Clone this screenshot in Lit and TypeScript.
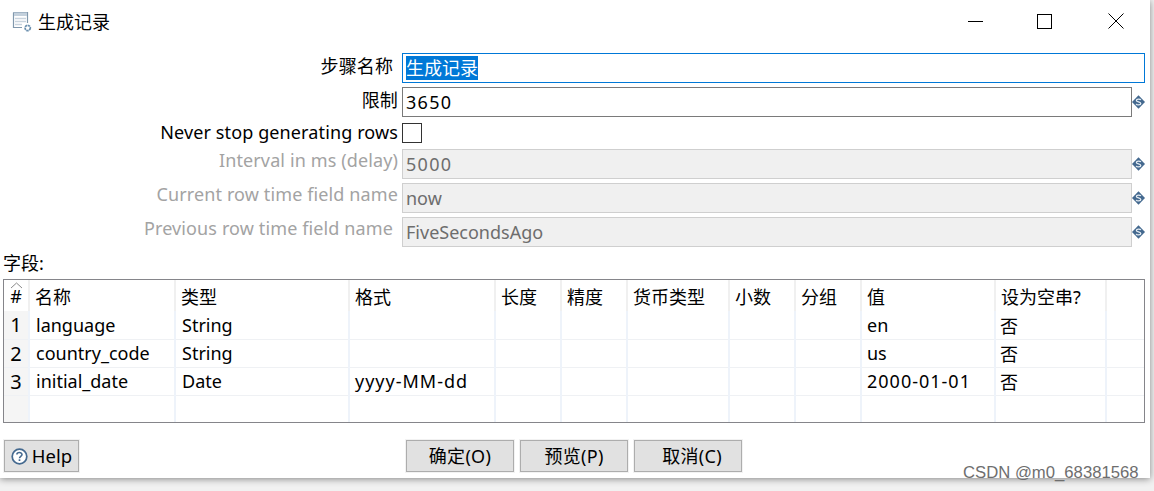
import { LitElement, html, css, svg } from "lit";
import { customElement } from "lit/decorators.js";

const COLS = [25, 146, 174, 146, 66, 66, 102, 66, 66, 134, 111, 39];
const HEAD = ["#", "名称", "类型", "格式", "长度", "精度", "货币类型", "小数", "分组", "值", "设为空串?", ""];
const ROWS = [
  ["1", "language", "String", "", "", "", "", "", "", "en", "否", ""],
  ["2", "country_code", "String", "", "", "", "", "", "", "us", "否", ""],
  ["3", "initial_date", "Date", "yyyy-MM-dd", "", "", "", "", "", "2000-01-01", "否", ""],
  ["", "", "", "", "", "", "", "", "", "", "", ""],
];
const WIDE = new Set(["yyyy-MM-dd", "2000-01-01"]);

const cellClass = (c: string, i: number) =>
  [i === 0 ? "num" : "", WIDE.has(c) ? "wide" : "", i >= 3 ? "tight" : "", c === "否" ? "cjk" : ""].join(" ");

const varIcon = html`<svg class="var" width="13" height="14" viewBox="0 0 13 14">
  <path d="M6.5 0.3 L13 7 L6.5 13.7 L0 7 Z" fill="#44698f"/>
  <path d="M8.8 5 C8.2 3.7 4.4 3.6 4.4 5.4 C4.4 7.2 8.8 6.6 8.8 8.6 C8.8 10.4 4.6 10.3 4.2 8.9" fill="none" stroke="#e6edf3" stroke-width="1.3"/>
</svg>`;

@customElement("app-root")
export class AppRoot extends LitElement {
  static styles = css`
    :host {
      display: block;
      width: 1154px;
      height: 491px;
      position: relative;
      overflow: hidden;
      background: #f1f1f1;
      font-family: "Noto Sans", "Noto Sans CJK SC", sans-serif;
      font-size: 18px;
      color: #000;
    }
    .window {
      width: 1150px;
      height: 478px;
      background: #fff;
      box-shadow: 0 1px 7px rgba(0, 0, 0, 0.45);
      display: flex;
      flex-direction: column;
    }
    .titlebar {
      height: 53px;
      flex: none;
      display: flex;
      align-items: flex-start;
      padding: 11px 0 0 12px;
      box-sizing: border-box;
    }
    .title {
      margin-left: 6px;
      font-size: 18px;
      line-height: 22px;
      flex: 1;
    }
    .ctrls {
      display: flex;
      margin-top: 3px;
      margin-right: 26px;
      gap: 53px;
    }
    .ctrls svg { display: block; }
    .ctrls .max { margin-top: -1px; }
    .ctrls .close { margin: -1px 0 0 2px; }
    .form {
      display: flex;
      flex-direction: column;
      gap: 4px;
    }
    .row {
      display: flex;
      align-items: center;
      height: 30px;
    }
    .row.check { height: 24px; }
    .label {
      width: 398px;
      flex: none;
      box-sizing: border-box;
      text-align: right;
      line-height: 24px;
      white-space: nowrap;
      letter-spacing: 0.12px;
      position: relative;
      top: -2px;
    }
    .check .label { top: -1px; }
    .label.in { padding-right: 5px; }
    .dis .label { color: #a3a3a3; top: -4px; }
    .input {
      margin-left: 4px;
      box-sizing: border-box;
      height: 30px;
      width: 730px;
      border: 1px solid #7a7a7a;
      padding: 2px 0 0 3px;
      line-height: 24px;
      background: #fff;
    }
    .input.focus {
      width: 743px;
      border: 1px solid #0078d7;
    }
    .input.digits { letter-spacing: 1.3px; }
    .sel { background: #0078d7; color: #fff; display: inline-block; line-height: 24px; }
    .dis .input {
      background: #f0f0f0;
      border-color: #cfcfcf;
      color: #6d6d6d;
    }
    .var { flex: none; display: block; }
    .box {
      margin-left: 4px;
      width: 20px;
      height: 20px;
      box-sizing: border-box;
      border: 1px solid #333;
      background: #fff;
    }
    .fields {
      margin: 4px 0 0 3px;
      height: 28px;
      line-height: 24px;
      font-size: 18px;
    }
    .grid {
      margin-left: 3px;
      width: 1142px;
      height: 144px;
      box-sizing: border-box;
      border: 1px solid #85858a;
      overflow: hidden;
    }
    table {
      border-collapse: collapse;
      table-layout: fixed;
      width: 1140px;
    }
    th, td {
      padding: 0 0 0 6px;
      text-align: left;
      font-weight: 400;
      font-size: 18px;
      white-space: nowrap;
      overflow: hidden;
      box-sizing: border-box;
    }
    th {
      height: 31px;
      padding-left: 5px;
      border-right: 2px solid #f0f0f0;
    }
    td {
      height: 28px;
      border-bottom: 1px solid #eff1f4;
      border-right: 2px solid #eef3fa;
    }
    td.tight { padding-left: 5px; }
    td.cjk { padding-left: 4px; }
    td.wide { letter-spacing: 1px; }
    tr:last-child td { border-bottom: none; }
    th.num, td.num {
      padding: 0;
      text-align: center;
    }
    th.num { position: relative; }
    td.num { background: #f5f5f5; font-size: 20px; }
    .caret { position: absolute; left: 6px; top: 2px; display: block; }
    th:last-child, td:last-child { border-right: none; }
    .buttons {
      display: flex;
      margin-top: 17px;
      padding-left: 4px;
    }
    .btn {
      box-sizing: border-box;
      height: 32px;
      background: #e1e1e1;
      border: 1px solid #adadad;
      outline: 1px solid #f2f2f2;
      display: flex;
      align-items: center;
      justify-content: center;
      line-height: 24px;
      white-space: nowrap;
    }
    .help { width: 75px; gap: 4px; margin-right: 327px; font-size: 18.5px; }
    .act { width: 108px; margin-right: 6px; letter-spacing: 0.3px; }
    .act.cancel { padding-left: 8px; }
    .mark {
      position: absolute;
      left: 963px;
      top: 463px;
      font-family: "Liberation Sans", sans-serif;
      font-size: 16.7px;
      line-height: 20px;
      color: #6e6e6e;
      white-space: nowrap;
    }
  `;

  private titleIcon() {
    return html`<svg width="20" height="22" viewBox="0 0 20 22" style="flex:none">
      <path d="M1.5 1.5 H15.5 V12 M10 16.5 H1.5 V1.5" fill="none" stroke="#8198ad" stroke-width="1.2"/>
      <path d="M2 1.5 H15 V5 H2 Z" fill="#c3d0dc"/>
      <path d="M3 7.5 H14 M3 10.5 H14 M3 13.5 H10" stroke="#c9d4de" stroke-width="1.4"/>
      <circle cx="15.7" cy="17" r="2.6" fill="none" stroke="#6b8fae" stroke-width="1.8" stroke-dasharray="2.4 .6"/>
    </svg>`;
  }

  private helpIcon() {
    return html`<svg width="17" height="17" viewBox="0 0 17 17" style="flex:none">
      <circle cx="8.5" cy="8.5" r="7.3" fill="#fff" stroke="#44698f" stroke-width="1.7"/>
      <path d="M5.9 6.6 C5.9 3.9 11 3.9 11 6.5 C11 8.4 8.5 8.2 8.5 10.2" fill="none" stroke="#44698f" stroke-width="1.6"/>
      <path d="M8.5 11.3 V13" stroke="#44698f" stroke-width="1.7"/>
    </svg>`;
  }

  render() {
    return html`
      <div class="window">
        <div class="titlebar">
          ${this.titleIcon()}
          <div class="title">生成记录</div>
          <div class="ctrls">
            <svg width="15" height="15" viewBox="0 0 15 15">${svg`<path d="M0 7.5 H15" stroke="#000" stroke-width="1"/>`}</svg>
            <svg class="max" width="17" height="17" viewBox="0 0 17 17">${svg`<rect x="1.5" y="1.5" width="14" height="14" fill="none" stroke="#000"/>`}</svg>
            <svg class="close" width="16" height="16" viewBox="0 0 16 16">${svg`<path d="M.5 .5 L15.5 15.5 M15.5 .5 L.5 15.5" stroke="#000" stroke-width="1"/>`}</svg>
          </div>
        </div>
        <div class="form">
          <div class="row">
            <div class="label in">步骤名称</div>
            <div class="input focus"><span class="sel">生成记录</span></div>
          </div>
          <div class="row">
            <div class="label">限制</div>
            <div class="input digits">3650</div>
            ${varIcon}
          </div>
          <div class="row check">
            <div class="label">Never stop generating rows</div>
            <div class="box"></div>
          </div>
          <div class="row dis">
            <div class="label">Interval in ms (delay)</div>
            <div class="input digits">5000</div>
            ${varIcon}
          </div>
          <div class="row dis">
            <div class="label">Current row time field name</div>
            <div class="input">now</div>
            ${varIcon}
          </div>
          <div class="row dis">
            <div class="label in">Previous row time field name</div>
            <div class="input">FiveSecondsAgo</div>
            ${varIcon}
          </div>
        </div>
        <div class="fields">字段:</div>
        <div class="grid">
          <table>
            <colgroup>${COLS.map((w) => html`<col style="width:${w}px" />`)}</colgroup>
            <thead>
              <tr>
                ${HEAD.map((h, i) =>
                  i === 0
                    ? html`<th class="num"><svg class="caret" width="13" height="7" viewBox="0 0 13 7"><path d="M1 6 L6.5 1 L12 6" fill="none" stroke="#8a8a8a"/></svg>${h}</th>`
                    : html`<th>${h}</th>`
                )}
              </tr>
            </thead>
            <tbody>
              ${ROWS.map(
                (r) => html`<tr>
                  ${r.map((c, i) => html`<td class=${cellClass(c, i)}>${c}</td>`)}
                </tr>`
              )}
            </tbody>
          </table>
        </div>
        <div class="buttons">
          <div class="btn help">${this.helpIcon()}<span>Help</span></div>
          <div class="btn act">确定(O)</div>
          <div class="btn act">预览(P)</div>
          <div class="btn act cancel">取消(C)</div>
        </div>
      </div>
      <div class="mark">CSDN @m0_68381568</div>
    `;
  }
}
